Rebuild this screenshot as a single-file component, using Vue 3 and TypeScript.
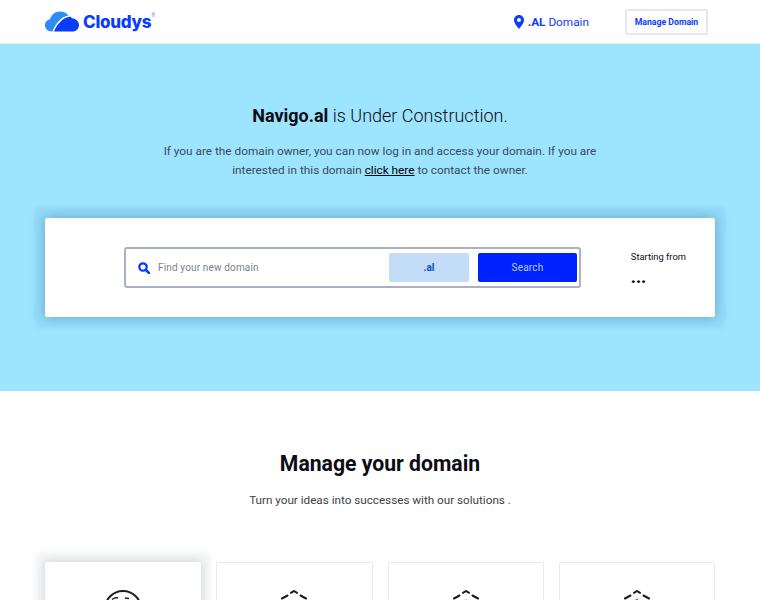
<template>
  <div class="page">
    <header class="topbar">
      <a class="brand" href="#">
        <svg class="cloud" width="34" height="21" viewBox="0 0 34 21" aria-hidden="true">
          <path d="M6.500 20.500C3 20.500 0 18 0 14.300C0 11 2.300 8.600 5 8.200C6.500 3.200 10.800 .5 15 .5C18.500 .5 21.500 1.800 23.500 4.500C16 5.500 10.500 12.500 7.500 20.500Z" fill="#2e8bfb" />
          <path d="M9 20.500C12 13.500 17.500 7 24 5.800C25.500 5.600 26.500 6.200 27 7.300C31 7.800 34 10.600 34 14C34 17.800 31 20.500 27.500 20.500Z" fill="#0a3cff" />
        </svg>
        <span class="wordmark">Cloudys</span><sup class="reg">®</sup>
      </a>
      <div class="top-right">
        <span class="tld-label">
          <svg width="10" height="14" viewBox="0 0 10 14" aria-hidden="true">
            <path fill-rule="evenodd" d="M5 0C2.200 0 0 2.200 0 5C0 8.500 5 14 5 14S10 8.500 10 5C10 2.200 7.800 0 5 0ZM5 3A2 2 0 1 1 5 7A2 2 0 1 1 5 3Z" fill="#0a3cff" />
          </svg>
          <span><b>.AL</b> Domain</span>
        </span>
        <a class="manage" href="#">Manage Domain</a>
      </div>
    </header>

    <section class="hero">
      <h1><strong>Navigo.al</strong> is Under Construction.</h1>
      <p>
        If you are the domain owner, you can now log in and access your domain. If you are<br />
        interested in this domain <a href="#">click here</a> to contact the owner.
      </p>
      <div class="search-card">
        <div class="search-box">
          <svg class="lens" width="12" height="12" viewBox="0 0 12 12" aria-hidden="true">
            <circle cx="5" cy="5" r="3.700" fill="none" stroke="#0a3cff" stroke-width="2.300" />
            <path d="M7.800 7.800L11 11" stroke="#0a3cff" stroke-width="2.600" stroke-linecap="round" />
          </svg>
          <span class="placeholder">Find your new domain</span>
          <span class="tld">.al</span>
          <button class="search-btn" type="button">Search</button>
        </div>
        <div class="price">
          <span>Starting from</span>
          <strong>...</strong>
        </div>
      </div>
    </section>

    <section class="manage-section">
      <h2>Manage your domain</h2>
      <p>Turn your ideas into successes with our solutions .</p>
      <div class="cards">
        <article v-for="card in cards" :key="card.id" class="card" :class="{ active: card.globe }">
          <svg v-if="card.globe" width="38" height="38" viewBox="0 0 38 38" aria-hidden="true">
            <g fill="none" stroke="#1d1d26" stroke-width="2">
              <circle cx="19" cy="19" r="18" />
              <path d="M8 9.500C10 8 12 7.500 14 8M21 8L25 8.500" stroke-width="1.400" />
            </g>
          </svg>
          <svg v-else width="30" height="36" viewBox="0 0 30 36" aria-hidden="true">
            <path d="M3 8.500L8.500 5.500M12 2.800L15 1L18 2.800M21.500 5.500L27 8.500" fill="none" stroke="#1d1d26" stroke-width="2" stroke-linecap="round" />
            <circle v-if="card.dot" cx="15" cy="10" r="1.500" :fill="card.dot" />
          </svg>
        </article>
      </div>
    </section>
  </div>
</template>

<script setup lang="ts">
const cards = [
  { id: 1, globe: true, dot: '' },
  { id: 2, globe: false, dot: '' },
  { id: 3, globe: false, dot: '#d5d8de' },
  { id: 4, globe: false, dot: '#2e8bfb' },
]
</script>

<style>
html,
body {
  overflow: hidden;
}
</style>

<style scoped>
.page {
  height: 600px;
  overflow: hidden;
  background: #fff;
  color: #0c0c14;
  font-family: Roboto, 'Liberation Sans', sans-serif;
}

.topbar {
  display: flex;
  align-items: center;
  justify-content: space-between;
  box-sizing: border-box;
  height: 44px;
  padding: 0 52px 0 45px;
  border-bottom: 1px solid #e4eef3;
}

.brand {
  display: flex;
  align-items: center;
  text-decoration: none;
}

.wordmark {
  margin-left: 4px;
  color: #0a3cff;
  font-family: Inter, sans-serif;
  font-size: 17px;
  font-weight: 800;
  letter-spacing: -0.25px;
}

.reg {
  align-self: flex-start;
  margin-top: 1px;
  color: #2e8bfb;
  font-size: 5px;
  line-height: 6px;
}

.top-right {
  display: flex;
  align-items: center;
  gap: 36px;
}

.tld-label {
  display: flex;
  align-items: center;
  gap: 4px;
  color: #0a3cff;
  font-size: 11.800px;
}

.manage {
  display: flex;
  align-items: center;
  justify-content: center;
  box-sizing: border-box;
  width: 83px;
  height: 26px;
  border: 2px solid #e6e8ec;
  border-radius: 2px;
  color: #0a3cff;
  font-size: 8.700px;
  font-weight: 700;
  text-decoration: none;
}

.hero {
  box-sizing: border-box;
  height: 347px;
  padding: 59px 45px 0;
  background: #9de4ff;
  text-align: center;
}

.hero h1 {
  margin: 0;
  font-size: 18px;
  font-weight: 300;
  line-height: 25px;
}

.hero h1 strong {
  font-weight: 700;
}

.hero p {
  margin: 14px 0 0;
  color: #3a4a58;
  font-size: 11.800px;
  font-weight: 400;
  line-height: 19px;
}

.hero p a {
  color: #000;
  text-decoration: underline;
}

.search-card {
  display: flex;
  align-items: center;
  box-sizing: border-box;
  height: 99px;
  margin-top: 38px;
  padding: 0 29px 0 79px;
  border-radius: 2px;
  background: #fff;
  box-shadow:
    0 0 12px rgba(40, 90, 130, 0.4),
    0 0 4px 11px rgba(70, 150, 200, 0.12);
}

.search-box {
  display: flex;
  align-items: center;
  box-sizing: border-box;
  width: 457px;
  height: 41px;
  padding: 0 2px 0 12px;
  border: 2px solid #aab1c5;
  border-radius: 3px;
}

.placeholder {
  flex: 1;
  margin-left: 8px;
  color: #7b7f8c;
  font-size: 10px;
  letter-spacing: 0.15px;
  text-align: left;
}

.tld {
  width: 80px;
  height: 29px;
  border-radius: 2px;
  background: #c3dcf8;
  color: #0a4fd0;
  font-size: 10px;
  font-weight: 700;
  line-height: 29px;
}

.search-btn {
  width: 99px;
  height: 29px;
  margin-left: 9px;
  border: 0;
  border-radius: 2px;
  background: #0022ff;
  color: #b9ccff;
  font-family: inherit;
  font-size: 10px;
  letter-spacing: 0.2px;
}

.price {
  display: flex;
  flex-direction: column;
  margin-left: auto;
  gap: 7px;
  text-align: left;
  font-size: 9.400px;
}

.price strong {
  font-size: 17px;
  font-weight: 900;
  line-height: 16px;
}

.manage-section {
  padding: 59px 45px 0;
  text-align: center;
}

.manage-section h2 {
  margin: 0;
  font-size: 21.200px;
  font-weight: 700;
  line-height: 27px;
}

.manage-section p {
  margin: 14px 0 0;
  color: #3e3e46;
  font-size: 11.700px;
  line-height: 19px;
}

.cards {
  display: grid;
  grid-template-columns: repeat(4, 1fr);
  gap: 15px;
  margin-top: 52px;
}

.card {
  display: flex;
  justify-content: center;
  box-sizing: border-box;
  height: 180px;
  padding-top: 27px;
  border: 1px solid #e8eaee;
  border-radius: 2px;
}

.card.active {
  border-color: transparent;
  box-shadow:
    0 0 8px rgba(60, 70, 90, 0.2),
    0 0 5px 10px rgba(100, 110, 130, 0.08);
}
</style>
